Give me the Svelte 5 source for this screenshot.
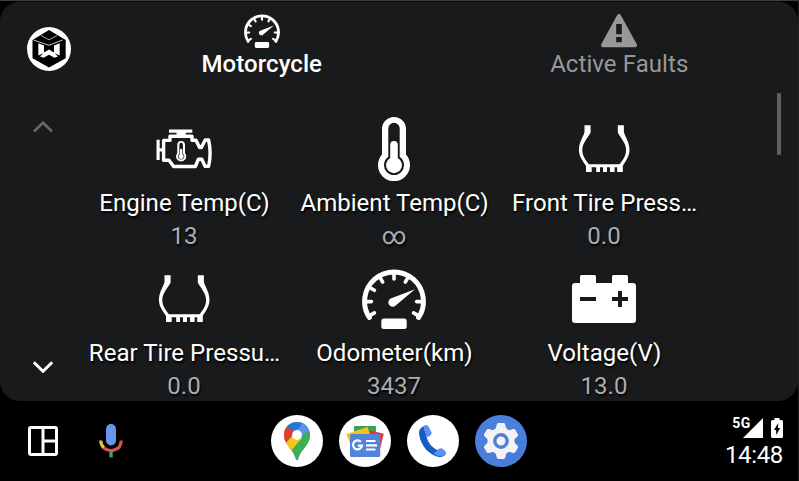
<script>
  const items = [
    { icon: 'engine', label: 'Engine Temp(C)', value: '13' },
    { icon: 'thermo', label: 'Ambient Temp(C)', value: '∞' },
    { icon: 'tire', label: 'Front Tire Press…', value: '0.0' },
    { icon: 'tire', label: 'Rear Tire Pressu…', value: '0.0' },
    { icon: 'gauge', label: 'Odometer(km)', value: '3437' },
    { icon: 'battery', label: 'Voltage(V)', value: '13.0' }
  ];
  const ticks = [-120, -90, -60, -30, 0, 30, 90, 120];
</script>

{#snippet gauge(size)}
  <svg width={size} height={size} viewBox="0 0 64 64" fill="#fff" stroke="#fff">
    <path d="M7.4 50.5A29.4 29.4 0 1 1 56.6 50.5" fill="none" stroke-width="5" stroke-linecap="round" />
    {#each ticks as a}
      <path d="M32 6V12" stroke-width="3.6" stroke-linecap="round" transform="rotate({a} 32 34.6)" />
    {/each}
    <path d="M30 31L53 22.2L34.3 38A4.4 4.4 0 1 1 30 31Z" stroke="none" />
    <rect x="19.3" y="51.5" width="25.4" height="10.5" rx="2.5" stroke="none" />
  </svg>
{/snippet}

{#snippet thermo()}
  <path fill="#fff" fill-rule="evenodd" d="M20 12a12 12 0 0 1 24 0v25.5a16 16 0 1 1-24 0zM26.3 11.5v28.3a10 10 0 1 0 11.4 0V11.5a5.7 5.7 0 0 0-11.4 0z" />
  <path fill="#fff" d="M28.2 27.8a3.8 3.8 0 0 1 7.6 0v13.3a8 8 0 1 1-7.6 0z" />
{/snippet}

<div class="screen">
  <main class="panel">
    <header>
      <div class="brand">
        <svg width="44" height="44" viewBox="0 0 44 44">
          <circle cx="22" cy="22" r="22" fill="#fff" />
          <path d="M22 3L38.7 13V31.3L22 40.5L5.5 31.3V13Z" fill="#000" />
          <path d="M6.5 13L22 18.3L35.5 13" fill="none" stroke="#ddd" stroke-width=".9" />
          <path d="M14 8.5L22 12.8L30 8.5" fill="none" stroke="#bbb" stroke-width=".9" />
          <path d="M11.3 16.2L17 18.4V26L11.3 28.5ZM32.7 16.2L27 18.4V26L32.7 28.5Z" fill="#fff" />
          <path d="M22 22.6L27 25.6L31 29.6L27.5 30.8L22 27.8L16.5 30.8L13 29.6L17 25.6Z" fill="#fff" />
        </svg>
      </div>
      <nav>
        <div class="tab active">
          {@render gauge(36)}
          <span>Motorcycle</span>
        </div>
        <div class="tab">
          <svg width="36" height="36" viewBox="0 0 36 36">
            <path d="M18 3L34 32.3H2Z" fill="#98989a" stroke="#98989a" stroke-width="4" stroke-linejoin="round" />
            <path d="M15.2 11h5.6v10.2h-5.6zM15.2 24h5.6v5.2h-5.6z" fill="#191a1b" />
          </svg>
          <span>Active Faults</span>
        </div>
      </nav>
    </header>

    <div class="content">
      <div class="pager">
        <svg width="20" height="12" viewBox="0 0 20 12"><path d="M1 10.5L10 1.7L19 10.5" fill="none" stroke="#68696a" stroke-width="2.6" /></svg>
        <svg width="20" height="12" viewBox="0 0 20 12"><path d="M.8 1.3L10 10.3L19.2 1.3" fill="none" stroke="#fff" stroke-width="3" /></svg>
      </div>
      <div class="grid">
        {#each items as item}
          <div class="cell">
            {#if item.icon === 'gauge'}
              {@render gauge(64)}
            {:else}
              <svg width="64" height="64" viewBox="0 0 64 64">
                {#if item.icon === 'engine'}
                  <path fill="#fff" d="M17 12.4h23.3v3.3h-6.5V19H24.5v-3.3H17z" />
                  <path fill="none" stroke="#fff" stroke-width="3.4" stroke-linejoin="round" d="M18 19.2H40V23.2H44L47.6 30.6H49.4L53.2 23H56.6Q59.6 36 56.6 49.4H53.2L49.8 42.2H46.4L43.4 49.5H21.6L17 43.2H11.6V23.4H18Z" />
                  <path fill="none" stroke="#fff" stroke-width="3.2" d="M6.1 22.8V43M6 32.8H11.6" />
                  <g transform="translate(18.9 24) scale(.32)">{@render thermo()}</g>
                {:else if item.icon === 'thermo'}
                  {@render thermo()}
                {:else if item.icon === 'tire'}
                  <path fill="#fff" d="M12.5 8.3H18.6V15.5C15.5 21.5 10.3 26 10.3 33C10.3 39.5 14.5 44 16.9 47.2H47.6C50 44 54.1 39.5 54.1 33C54.1 26 48.9 21.5 45.8 15.5V8.3H51.9V15C53.2 20 57.5 25 57.5 33C57.5 40 52.5 45.5 50.8 49V55H45.2V50.2H42.6V55H38V50.2H35V55H31V50.2H28V55H24.2V50.2H19.7V55H14V49C12 45.5 6.9 40 6.9 33C6.9 25 11.3 20 12.5 15Z" />
                {:else}
                  <path fill="#fff" fill-rule="evenodd" d="M9.5 8H22.5Q24 8 24 9.5V16H40V9.5Q40 8 41.5 8H54.5Q56 8 56 9.5V16H61Q64 16 64 19V53Q64 56 61 56H3Q0 56 0 53V19Q0 16 3 16H8V9.5Q8 8 9.5 8ZM8 30V34H24V30ZM46 24V30H40V34H46V40H50V34H56V30H50V24Z" />
                {/if}
              </svg>
            {/if}
            <div class="label">{item.label}</div>
            <div class="value">{item.value}</div>
          </div>
        {/each}
      </div>
      <div class="scroll"></div>
    </div>
  </main>

  <footer>
    <div class="left">
      <svg width="30" height="30" viewBox="0 0 30 30">
        <rect x="1.5" y="1.5" width="27" height="27" rx="1.5" fill="none" stroke="#fff" stroke-width="3" />
        <path d="M15 2V28M15 15H28" stroke="#fff" stroke-width="3" />
      </svg>
      <svg width="24" height="34" viewBox="0 0 24 34" fill="none">
        <rect x="7" y="0" width="10" height="21.5" rx="5" fill="#6795ee" />
        <path d="M1.8 16.5C1.8 20 3.2 22.3 5 24" stroke="#edbd42" stroke-width="3.2" />
        <path d="M5 24C9.5 28.2 22.2 27.5 22.2 16.5" stroke="#ce5752" stroke-width="3.2" />
        <path d="M12 27.5V33.3" stroke="#43a563" stroke-width="3.4" />
      </svg>
    </div>

    <div class="apps">
      <div class="app">
        <svg width="52" height="52" viewBox="0 0 52 52">
          <defs><clipPath id="pin"><path d="M26 7C18.6 7 13 12.8 13 20C13 30 22 34 24.5 43Q26 47.5 27.5 43C30 34 39 30 39 20C39 12.8 33.4 7 26 7Z" /></clipPath></defs>
          <g clip-path="url(#pin)">
            <path d="M10 5H42V48H10Z" fill="#3bb057" />
            <path d="M10 38L36 7H10Z" fill="#f8c417" />
            <path d="M8 24V9L18 10L27 18L17 30Z" fill="#db3d36" />
            <path d="M10 6H30L36 10L27 19L17 12Z" fill="#2676e0" />
            <path d="M33.5 6L22.5 19L26 24L42 13V6Z" fill="#5a92ef" />
            <path d="M40 14L27 29L21 48H42Z" fill="#3bb057" />
            <path d="M13 30L22 20L31 23L19 37Z" fill="#f8c417" />
          </g>
          <circle cx="26" cy="20" r="5" fill="#fff" />
        </svg>
      </div>
      <div class="app">
        <svg width="52" height="52" viewBox="0 0 52 52">
          <rect x="15" y="11" width="22" height="14" rx="1" fill="#38a457" />
          <path d="M30 15L44.8 18.8L41 34L30 30Z" fill="#d93d42" />
          <path d="M7.2 19L28.5 12L33 26L14 36Z" fill="#f6c31c" />
          <rect x="11" y="19" width="30.2" height="23" rx="1.5" fill="#5384dc" />
          <path d="M21.8 26.8A4.5 4.5 0 1 0 23 30.6H18.9" fill="none" stroke="#fff" stroke-width="2.2" />
          <path d="M27 26H36.5M27 30.3H38M27 34.5H36.5" stroke="#fff" stroke-width="2.2" />
        </svg>
      </div>
      <div class="app">
        <svg width="52" height="52" viewBox="0 0 52 52">
          <path d="M16.5 11Q11 14 12.2 20C14 31 22 40 32 42Q36.5 42.5 39 39L32 35.5C26 34 20 27 19.5 21Z" fill="#175bc5" />
          <path d="M16.2 11.4Q19.8 8.5 21.8 12L24.4 17.2Q25 19 23.5 20.3L20 22.5Z" fill="#5b90f4" />
          <path d="M32 33.7Q34 32.6 36 33.9L38.3 36.2Q40.2 38.7 37.5 40.3Q35 41.8 30 40.4L26.5 38.8Z" fill="#5b90f4" />
        </svg>
      </div>
      <div class="app blue">
        <svg width="52" height="52" viewBox="0 0 52 52">
          <path d="M42 18L52 28V43L42 52H32L17 42Z" fill="#3f76d0" opacity=".3" />
          <g fill="#f3f3f4">
            <circle cx="26" cy="26" r="13.5" />
            {#each [0, 60, 120, 180, 240, 300] as a}
              <path d="M20.2 15L21.8 9.4Q22.1 8 23.3 8H28.7Q29.9 8 30.2 9.4L31.8 15Z" transform="rotate({a} 26 26)" />
            {/each}
          </g>
          <circle cx="26" cy="26" r="6.2" fill="#f3f3f4" stroke="#4b7fdc" stroke-width="3.4" />
        </svg>
      </div>
    </div>

    <div class="status">
      <div class="signals">
        <span>5G</span>
        <svg class="signal" width="20" height="20" viewBox="0 0 20 20"><path d="M20 0V20H0Z" fill="#fff" /></svg>
        <svg width="12" height="20" viewBox="0 0 12 20">
          <path d="M3.5 0H8.5V2H10.5Q12 2 12 3.5V18.5Q12 20 10.5 20H1.5Q0 20 0 18.5V3.5Q0 2 1.5 2H3.5Z" fill="#fff" />
          <path d="M7.2 5L3 12H5.2V17L9.2 10H7Z" fill="#000" />
        </svg>
      </div>
      <time>14:48</time>
    </div>
  </footer>
</div>

<style>
  :global(body) { margin: 0; background: #000; }
  .screen {
    box-sizing: border-box; width: 799px; height: 481px; overflow: hidden;
    display: flex; flex-direction: column; background: #000; color: #fff;
    border-top: 1px solid #3c3d39; border-right: 1px solid #202121;
    font-family: Roboto, "Noto Sans", sans-serif; font-size: 24px; line-height: 28px;
  }
  svg { display: block; flex: none; }
  .panel {
    height: 400px; flex: none; display: flex; flex-direction: column;
    background: #191a1b; border-radius: 20px; overflow: hidden;
    box-sizing: border-box; border-top: 1px solid #0a0b0b;
  }
  header { height: 87px; flex: none; display: flex; }
  .brand { width: 83px; box-sizing: border-box; padding: 25px 0 0 27px; }
  nav { flex: 1; display: flex; }
  .tab { flex: 1; display: flex; flex-direction: column; align-items: center; padding-top: 12px; color: #98989a; letter-spacing: .07px; }
  .tab svg { margin-top: -1px; margin-bottom: 1px; }
  .active { color: #fff; font-weight: 500; }
  .content { flex: 1; min-height: 0; display: flex; }
  .pager {
    width: 79px; box-sizing: border-box; padding: 32px 0 28px 33px;
    display: flex; flex-direction: column; justify-content: space-between;
  }
  .grid { width: 630px; display: grid; grid-template-columns: repeat(3, 210px); grid-auto-rows: 150px; padding-top: 16px; }
  .cell { display: flex; flex-direction: column; align-items: center; padding-top: 12px; height: 138px; text-shadow: 1px 2px 2px #000; }
  .label { white-space: nowrap; margin-top: 8px; padding-left: 1px; letter-spacing: .03px; }
  .value { color: #acadae; margin-top: 5px; }
  .scroll { width: 4px; height: 62px; margin: 4px 0 0 68px; border-radius: 1px; background: #5e5f61; }
  footer { flex: 1; display: flex; align-items: center; justify-content: space-between; padding: 0 15px 0 28px; }
  .left { display: flex; align-items: center; gap: 41px; width: 243px; }
  .apps { display: flex; gap: 16px; }
  .app { width: 52px; height: 52px; border-radius: 50%; background: #fff; overflow: hidden; }
  .blue { background: #4b7fdc; }
  .status { flex: 1; display: flex; flex-direction: column; align-items: flex-end; padding-top: 5px; }
  .signals { display: flex; }
  .signals span { font-size: 14px; line-height: 11px; font-weight: 700; letter-spacing: .6px; }
  .signal { margin: 0 8px 0 -8px; }
  time { margin-top: 3px; line-height: 28px; letter-spacing: -.35px; }
</style>
